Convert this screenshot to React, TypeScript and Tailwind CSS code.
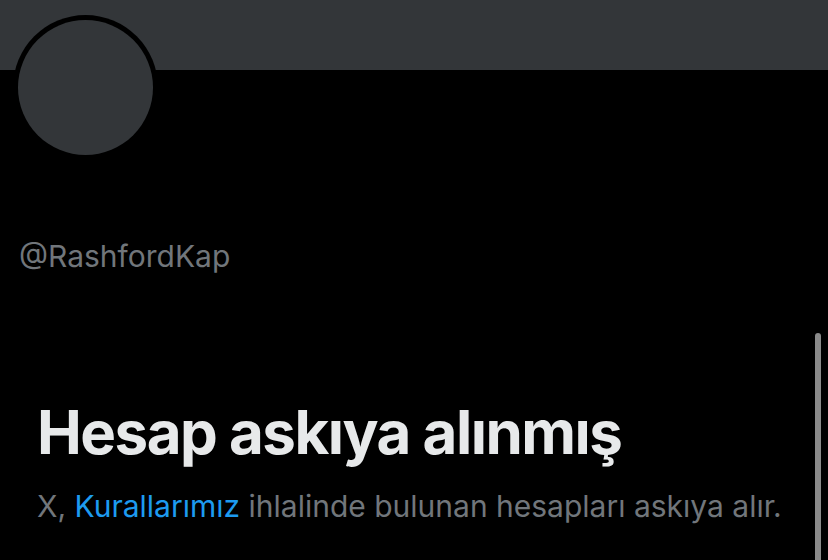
export default function App() {
  return (
    <div className="relative h-[560px] w-[828px] overflow-hidden bg-black font-['Inter','Liberation_Sans',sans-serif]">
      {/* banner */}
      <div className="h-[70px] bg-[#333639]" />

      {/* avatar */}
      <div className="-mt-[55px] ml-[13px] size-[145px] rounded-full bg-black p-[5px]">
        <div className="size-full rounded-full bg-[#333639]" />
      </div>

      <div className="mt-[78px] pl-[19px] text-[30px] leading-[36px] text-[#71767b]">
        @RashfordKap
      </div>

      <div className="mt-[122px] px-[37px]">
        <h1 className="text-[60px] font-bold leading-[72px] tracking-[-0.025em] text-[#e7e9ea]">
          Hesap askıya alınmış
        </h1>
        <p className="mt-[20px] text-[30px] leading-[36px] text-[#71767b]">
          X, <span className="text-[#1d9bf0]">Kurallarımız</span> ihlalinde bulunan hesapları askıya alır.
        </p>
      </div>

      {/* scrollbar */}
      <div className="absolute right-[7px] top-[333px] h-[240px] w-[6px] rounded-full bg-[#8a8a8a]" />
    </div>
  )
}
